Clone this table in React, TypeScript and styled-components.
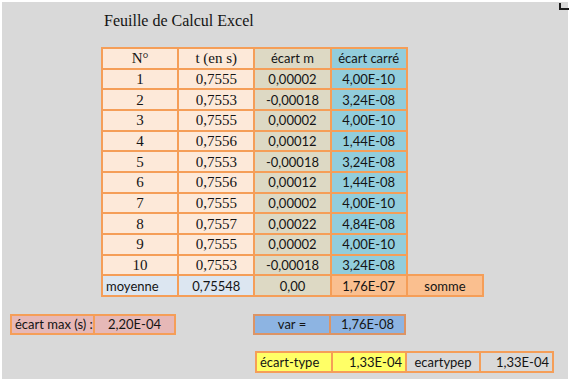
import styled, { createGlobalStyle } from 'styled-components'

const ORANGE = '#f59e58'

const GlobalStyle = createGlobalStyle`
  html, body {
    margin: 0;
    padding: 0;
    background: #ffffff;
  }
  body {
    width: 571px;
    height: 382px;
    overflow: hidden;
  }
`

const Sheet = styled.div`
  position: relative;
  box-sizing: border-box;
  margin: 2px;
  width: 566px;
  height: 377px;
  background: #d9d9d9;
  padding-top: 8px;
  color: #141414;
`

const CornerMark = styled.div`
  position: absolute;
  top: 1px;
  right: -1px;
  width: 8px;
  height: 5px;
  border-left: 2px solid #1c1c1c;
  border-bottom: 2px solid #1c1c1c;
`

const Title = styled.h1`
  margin: 0 0 0 102px;
  font: 400 16px/22px 'Liberation Serif', serif;
`

const Grid = styled.table`
  border-collapse: collapse;
  table-layout: fixed;
  width: 383px;
  margin: 15px 0 0 99px;
`

const Cell = styled.td<{ $bg?: string; $serif?: boolean; $align?: string; $bare?: boolean }>`
  height: 20.67px;
  padding: 0 3px;
  box-sizing: border-box;
  border: ${(p) => (p.$bare ? 'none' : `2px solid ${ORANGE}`)};
  background: ${(p) => (p.$bare ? 'transparent' : p.$bg)};
  text-align: ${(p) => p.$align ?? 'center'};
  vertical-align: middle;
  white-space: nowrap;
  font: ${(p) => (p.$serif ? "400 15px/16px 'Liberation Serif', serif" : "400 13px/16px Lato, sans-serif")};
`

const Strip = styled.div<{ $indent: number; $top: number; $gap?: number }>`
  display: flex;
  gap: ${(p) => p.$gap ?? 0}px;
  margin: ${(p) => p.$top}px 0 0 ${(p) => p.$indent}px;
`

const Box = styled.div<{ $edge?: string }>`
  display: flex;
  border: 2px solid ${(p) => p.$edge ?? ORANGE};
  & > * + * {
    border-left: 2px solid ${(p) => p.$edge ?? ORANGE};
  }
`

const Field = styled.div<{ $w: number; $h: number; $bg: string; $align?: string }>`
  width: ${(p) => p.$w}px;
  height: ${(p) => p.$h}px;
  padding: 0 3px;
  box-sizing: border-box;
  background: ${(p) => p.$bg};
  text-align: ${(p) => p.$align ?? 'center'};
  white-space: nowrap;
  font: 400 13px/${(p) => p.$h}px Lato, sans-serif;
`

const rows: [string, string, string, string][] = [
  ['1', '0,7555', '0,00002', '4,00E-10'],
  ['2', '0,7553', '-0,00018', '3,24E-08'],
  ['3', '0,7555', '0,00002', '4,00E-10'],
  ['4', '0,7556', '0,00012', '1,44E-08'],
  ['5', '0,7553', '-0,00018', '3,24E-08'],
  ['6', '0,7556', '0,00012', '1,44E-08'],
  ['7', '0,7555', '0,00002', '4,00E-10'],
  ['8', '0,7557', '0,00022', '4,84E-08'],
  ['9', '0,7555', '0,00002', '4,00E-10'],
  ['10', '0,7553', '-0,00018', '3,24E-08'],
]

const PEACH = '#fde9d9'
const TAN = '#ddd9c4'
const TEAL = '#92cddc'
const ICE = '#dce6f1'
const APRICOT = '#fabf8f'

export default function App() {
  return (
    <>
      <GlobalStyle />
      <Sheet>
        <CornerMark />
        <Title>Feuille de Calcul Excel</Title>

        <Grid>
          <tbody>
            <tr>
              <Cell $bg={PEACH} $serif>N°</Cell>
              <Cell $bg={PEACH} $serif>t (en s)</Cell>
              <Cell $bg={TAN}>écart m</Cell>
              <Cell $bg={TEAL}>écart carré</Cell>
              <Cell $bare />
            </tr>
            {rows.map(([n, t, m, c]) => (
              <tr key={n}>
                <Cell $bg={PEACH} $serif>{n}</Cell>
                <Cell $bg={PEACH} $serif>{t}</Cell>
                <Cell $bg={TAN}>{m}</Cell>
                <Cell $bg={TEAL}>{c}</Cell>
                <Cell $bare />
              </tr>
            ))}
            <tr>
              <Cell $bg={ICE} $align="left">moyenne</Cell>
              <Cell $bg={ICE}>0,75548</Cell>
              <Cell $bg={TAN}>0,00</Cell>
              <Cell $bg={APRICOT}>1,76E-07</Cell>
              <Cell $bg={APRICOT}>somme</Cell>
            </tr>
          </tbody>
        </Grid>

        <Strip $indent={8} $top={17} $gap={77}>
          <Box>
            <Field $w={81} $h={17} $bg="#e6b8b7" $align="left">écart max (s) :</Field>
            <Field $w={81} $h={17} $bg="#e6b8b7">2,20E-04</Field>
          </Box>
          <Box $edge="#dc9465">
            <Field $w={74} $h={17} $bg="#8db4e2">var =</Field>
            <Field $w={75} $h={17} $bg="#8db4e2">1,76E-08</Field>
          </Box>
        </Strip>

        <Strip $indent={253} $top={16}>
          <Box>
            <Field $w={74} $h={18} $bg="#ffff66" $align="left">écart-type</Field>
            <Field $w={74} $h={18} $bg="#ffff66" $align="right">1,33E-04</Field>
            <Field $w={74} $h={18} $bg="#d9d9d9">ecartypep</Field>
            <Field $w={73} $h={18} $bg="#d9d9d9" $align="right">1,33E-04</Field>
          </Box>
        </Strip>
      </Sheet>
    </>
  )
}
